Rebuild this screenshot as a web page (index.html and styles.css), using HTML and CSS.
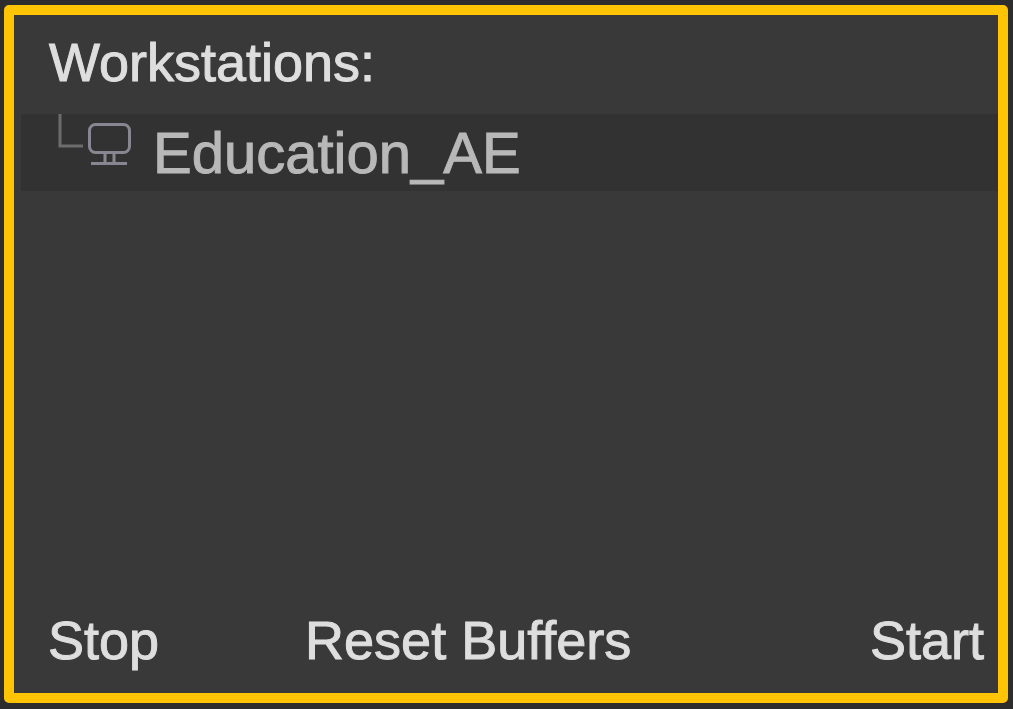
FILE: index.html
```html
<!DOCTYPE html>
<html lang="en">
<head>
<meta charset="utf-8">
<meta name="viewport" content="width=device-width, initial-scale=1">
<title>Workstations</title>
<link rel="stylesheet" href="styles.css">
</head>
<body>
<main class="panel">
  <h1 class="title">Workstations:</h1>
  <ul class="tree">
    <li class="node">
      <svg class="node-icon" width="76" height="56" viewBox="0 0 76 56" fill="none" aria-hidden="true">
        <path d="M5 0V32H28" stroke="#6c6c6c" stroke-width="3"/>
        <g stroke="#888690" stroke-width="3">
          <rect x="34.500" y="10.500" width="40" height="28" rx="6"/>
          <path d="M50 39V49M59 39V49M36 49.500H72"/>
        </g>
      </svg>
      <span class="node-name">Education_AE</span>
    </li>
  </ul>
  <footer class="actions">
    <button class="action" type="button">Stop</button>
    <button class="action" type="button">Reset Buffers</button>
    <button class="action action-end" type="button">Start</button>
  </footer>
</main>
</body>
</html>
```
FILE: styles.css
```css
* {
  box-sizing: border-box;
}

body {
  margin: 0;
  min-height: 100vh;
  display: flex;
  padding: 5px 5px 6px 4px;
  background: #2d2d2d;
  color: #dedede;
  font-family: "Liberation Sans", Arial, sans-serif;
  -webkit-text-stroke: 1px currentColor;
}

.panel {
  flex: 1;
  display: flex;
  flex-direction: column;
  border: 10px solid #ffc403;
  border-radius: 5px;
  background: #393939;
}

.title {
  margin: 0;
  padding: 15px 35px 20px;
  font-size: 54px;
  line-height: 64px;
  font-weight: 400;
}

.tree {
  list-style: none;
  margin: 0 0 0 7px;
  padding: 0;
}

.node {
  display: flex;
  align-items: flex-start;
  gap: 22px;
  min-height: 77px;
  padding-left: 34px;
  background: #323232;
  color: #b8b8b8;
}

.node-icon {
  flex: none;
}

.node-name {
  padding-top: 3px;
  font-size: 58px;
  line-height: 72px;
}

.actions {
  display: flex;
  gap: 146px;
  margin-top: auto;
  padding: 0 14px 21px 34px;
}

.action {
  padding: 0;
  border: 0;
  background: none;
  color: inherit;
  font-family: inherit;
  font-size: 54px;
  line-height: 64px;
  cursor: pointer;
}

.action-end {
  margin-left: auto;
}
```
